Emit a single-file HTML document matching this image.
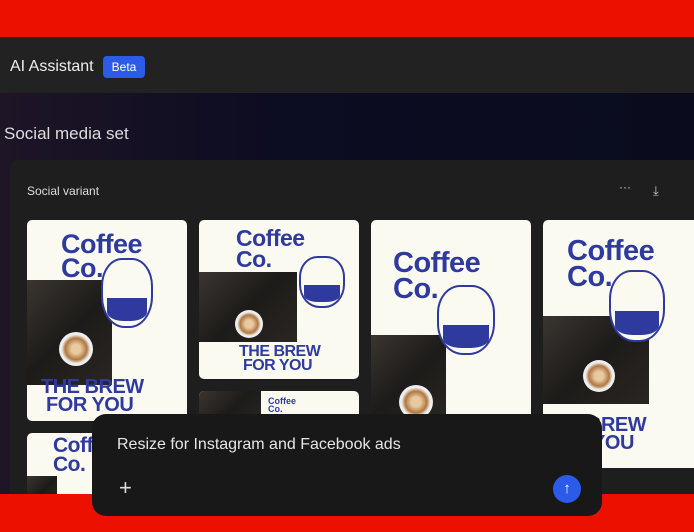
<!DOCTYPE html>
<html><head><meta charset="utf-8"><style>
*{margin:0;padding:0;box-sizing:border-box}
body{width:694px;height:532px;overflow:hidden;background:#111;font-family:"Liberation Sans",sans-serif;position:relative}
.abs{position:absolute}
.red{background:#eb1000}
.card{position:absolute;background:#fbfaf1;border-radius:5px;overflow:hidden}
.t{position:absolute;color:#2f3a9e;font-weight:bold;letter-spacing:-0.5px;line-height:0.9}
.ph{position:absolute;background:linear-gradient(135deg,#3a3530,#1d1b19 50%,#2a2622);}
.cup{position:absolute;border-radius:50%;background:radial-gradient(circle,#e8c9a0 20%,#b07840 45%,#eee 60%);}
.pot{position:absolute;border:2px solid #2f3a9e;border-radius:40% 40% 45% 45%;background:#fbfaf1}
.pot::after{content:"";position:absolute;left:8%;right:8%;bottom:8%;height:35%;background:#2f3a9e;border-radius:0 0 40% 40%}
</style></head><body>
<div class="abs red" style="left:0;top:0;width:694px;height:37px"></div>
<div class="abs" style="left:0;top:37px;width:694px;height:56px;background:#222"></div>
<div class="abs" style="left:10px;top:58px;color:#eee;font-size:16px">AI Assistant</div>
<div class="abs" style="left:103px;top:56px;width:42px;height:22px;background:#2b5be8;border-radius:4px;color:#fff;font-size:12px;text-align:center;line-height:22px">Beta</div>
<div class="abs" style="left:0;top:93px;width:694px;height:401px;background:linear-gradient(90deg,#1e1526,#0c0c22 40%,#0a0c1e)"></div>
<div class="abs" style="left:4px;top:124px;color:#ddd;font-size:17px">Social media set</div>
<div class="abs" style="left:10px;top:160px;width:690px;height:340px;background:#1e1e1e;border-radius:8px"></div>
<div class="abs" style="left:27px;top:184px;color:#ddd;font-size:12px">Social variant</div>
<div class="abs" style="left:619px;top:180px;color:#ccc;font-size:12px">···</div>
<div class="abs" style="left:653px;top:183px;color:#ccc;font-size:13px">⤓</div>

<div class="card" style="left:27px;top:220px;width:160px;height:201px">
 <div class="ph" style="left:0;top:60px;width:85px;height:105px"></div>
 <div class="cup" style="left:32px;top:112px;width:34px;height:34px"></div>
 <div class="t" style="left:34px;top:12px;font-size:27px">Coffee<br>Co.</div>
 <div class="pot" style="left:74px;top:38px;width:52px;height:70px"></div>
 <div class="t" style="left:14px;top:158px;font-size:20px">THE BREW<br>&nbsp;FOR YOU</div>
</div>
<div class="card" style="left:199px;top:220px;width:160px;height:159px">
 <div class="ph" style="left:0;top:52px;width:98px;height:70px"></div>
 <div class="cup" style="left:36px;top:90px;width:28px;height:28px"></div>
 <div class="t" style="left:37px;top:8px;font-size:23px">Coffee<br>Co.</div>
 <div class="pot" style="left:100px;top:36px;width:46px;height:52px"></div>
 <div class="t" style="left:40px;top:125px;font-size:16px">THE BREW<br>&nbsp;FOR YOU</div>
</div>
<div class="card" style="left:199px;top:391px;width:160px;height:40px">
 <div class="ph" style="left:0;top:0;width:62px;height:40px"></div>
 <div class="t" style="left:69px;top:6px;font-size:9px;letter-spacing:0">Coffee<br>Co.</div>
</div>
<div class="card" style="left:371px;top:220px;width:160px;height:200px">
 <div class="ph" style="left:0;top:115px;width:75px;height:90px"></div>
 <div class="cup" style="left:28px;top:165px;width:34px;height:34px"></div>
 <div class="t" style="left:22px;top:30px;font-size:29px">Coffee<br>Co.</div>
 <div class="pot" style="left:66px;top:65px;width:58px;height:70px"></div>
</div>
<div class="card" style="left:543px;top:220px;width:160px;height:248px">
 <div class="ph" style="left:0;top:96px;width:106px;height:88px"></div>
 <div class="cup" style="left:40px;top:140px;width:32px;height:32px"></div>
 <div class="t" style="left:24px;top:18px;font-size:29px">Coffee<br>Co.</div>
 <div class="pot" style="left:66px;top:50px;width:56px;height:72px"></div>
 <div class="t" style="left:44px;top:196px;font-size:20px">BREW<br>&nbsp;YOU</div>
</div>
<div class="card" style="left:27px;top:433px;width:90px;height:70px">
 <div class="t" style="left:26px;top:4px;font-size:21px">Coffee<br>Co.</div>
 <div class="ph" style="left:0;top:43px;width:30px;height:30px"></div>
</div>

<div class="abs red" style="left:0;top:494px;width:694px;height:38px"></div>
<div class="abs" style="left:92px;top:414px;width:510px;height:102px;background:#181818;border-radius:14px"></div>
<div class="abs" style="left:117px;top:436px;color:#e6e6e6;font-size:16px">Resize for Instagram and Facebook ads</div>
<div class="abs" style="left:119px;top:476px;color:#ddd;font-size:22px;font-weight:300;line-height:24px">+</div>
<div class="abs" style="left:553px;top:475px;width:28px;height:28px;border-radius:50%;background:#2b5be8;color:#fff;text-align:center;line-height:28px;font-size:15px">↑</div>
</body></html>
